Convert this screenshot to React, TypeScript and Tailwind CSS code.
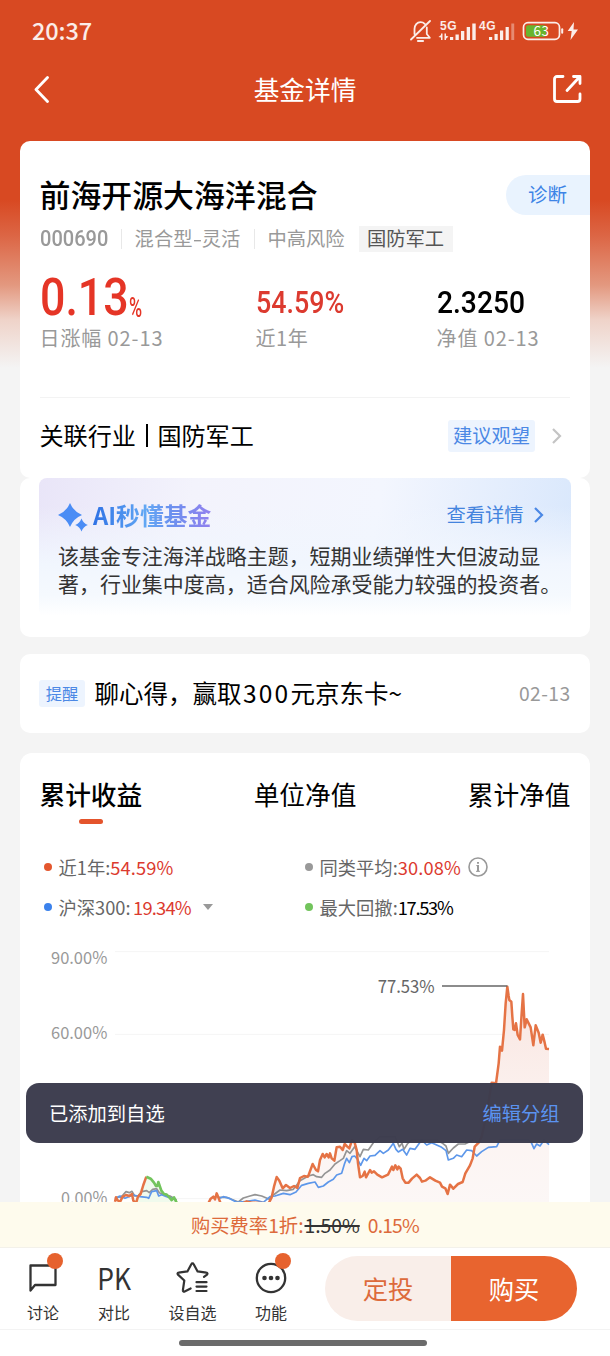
import type { ReactNode } from "react"

const ORANGE = "345,785 348,772 352,780 360,786 368,770 378,765 388,768 396,762 400,782 408,790 414,770 422,762 430,735 439,710"
const GREEN = "439,710 452,716 462,728 468,738 472,738 475,726 484,752 492,762 500,764 508,772 515,780 522,772 530,788"
const ORANGE_BASE = "625,790 632,776 640,770 645,778 650,760 656,775 662,790 728,790 740,784 755,788 806,790 815,772 822,740 830,711 838,722 848,745 858,735 870,744 882,738 892,744 900,714 912,708 924,710 938,672 948,690 954,694 960,660 968,642 974,652 980,642 986,652 990,640 995,655 1003,662 1010,622 1020,620"
const ORANGE_RISE = "1028,630 1034,612 1040,618 1048,625 1056,600 1064,608 1070,630 1074,670 1080,712 1088,708 1094,695 1098,712 1110,690 1115,698 1122,694 1132,704 1146,712 1164,704 1176,680 1180,690 1186,676 1192,688 1196,680 1202,686 1208,715 1216,728 1226,728 1236,716 1250,704 1260,714 1266,725 1276,722 1290,712 1306,722 1320,728 1326,740 1336,745 1343,762 1350,734 1360,746 1374,732 1388,726 1396,700 1410,676 1418,655 1424,620 1436,608 1445,590 1460,520 1475,428 1488,430 1496,370 1500,320 1506,332 1512,270 1517,190 1522,140 1526,168 1528,180 1534,185 1537,230 1540,268 1544,270 1548,250 1553,285 1560,298 1565,220 1569,162 1574,262 1580,238 1592,262 1600,316 1607,256 1616,278 1622,308 1628,284 1634,308 1638,326 1647,327"
const GRAY_START = "345,775 355,770 362,772 370,764 378,755 388,758 396,754 404,768 414,768 425,755 440,752 448,758 458,748 470,746 478,758 490,764 510,768 530,780"
const GRAY = "655,772 680,772 700,780 715,786 730,774 750,768 765,764 785,768 808,778 820,765 840,750 860,752 880,748 900,722 925,708 940,704 950,710 965,712 975,700 990,690 1005,672 1020,662 1030,655 1040,632 1050,640 1064,620 1080,650 1090,628 1105,630 1120,608 1140,590 1185,590 1198,620 1206,610 1212,628 1222,612 1235,600 1310,600 1325,608 1338,618 1345,640 1360,624 1375,612 1395,612 1420,600"
const BLUE_START = "345,778 360,768 375,775 400,765 420,770 440,772 446,775 455,755 470,752 476,768 485,764 500,770 525,778"
const BLUE = "655,776 670,770 690,776 710,787 740,784 765,780 790,787 810,770 825,768 850,760 870,764 888,756 905,736 925,730 945,726 955,742 970,738 985,726 1000,718 1010,705 1025,700 1034,670 1040,655 1048,668 1056,650 1064,648 1074,660 1082,676 1092,655 1100,662 1110,648 1125,646 1140,632 1150,640 1165,630 1180,610 1188,628 1195,636 1208,628 1220,645 1230,625 1245,628 1265,600 1280,615 1295,608 1310,615 1325,622 1338,632 1345,660 1360,655 1370,645 1385,650 1400,630 1415,632 1430,648 1445,635 1465,622 1490,620 1500,600 1585,600 1594,608 1602,626 1610,612 1620,618 1632,600 1647,614"

function StatusBar() {
  return (
    <div className="flex h-[62px] items-center justify-between pr-[30px] pl-[32px] text-white/90">
      <span className="text-[23.5px] leading-none font-medium tracking-[-0.1px]">20:37</span>
      <svg width="170" height="32" viewBox="410 15.500 170 32" fill="none" stroke="currentColor" strokeWidth="1.800" strokeLinecap="round" strokeLinejoin="round">
        <path d="M411 40 430 21.500M414.500 34.500V29.500c0-4 2.600-6.800 6-6.800 1.800 0 3.200.6 4.200 1.600M426.800 28v6.500l3 3.800H417" />
        <path d="M418 41.500h5" strokeWidth="2.200" />
        <g fill="currentColor" stroke="none" fontSize="12" fontWeight="700" fontFamily="Liberation Sans">
          <text x="440" y="30.500" textLength="16.500">5G</text>
          <text x="479" y="30.500" textLength="16.500">4G</text>
          <path d="M441 34h1.500v6.400H441zM438.500 37.500l2.500-2v2.600zM444.500 34h1.500v6.400h-1.500zM448.500 37l-2.500 2.200v-3z" />
          <path d="M450 37.500h3.200v2.900H450zM455.500 35h3.300v5.400h-3.300zM461 31.500h3.300v8.900H461zM466.700 27.500h3.300v12.900h-3.300zM472.300 24h3.400v16.400h-3.400z" />
          <path d="M489 37.500h3.200v2.900H489zM494.500 34.500h3.200v5.900h-3.200zM500 31h3.200v9.400H500zM505.600 27.500h3.200v12.900h-3.200z" />
          <path d="M511.300 24h2.900v16.400h-2.900z" opacity=".4" />
        </g>
        <rect x="523.500" y="23.200" width="36" height="16.600" rx="4.500" strokeWidth="1.700" />
        <rect x="526" y="25.700" width="20" height="11.600" rx="2" fill="#68b42e" stroke="none" />
        <text x="533.500" y="36.600" fill="white" stroke="none" fontSize="13.500" fontFamily="Noto Sans CJK SC" textLength="15.500">63</text>
        <path d="M562.200 29.800v3.400" strokeWidth="2" />
        <path d="M574 22.500l-6.300 9h4L570.500 40.500l7.500-10.500h-4.500z" fill="currentColor" stroke="none" />
      </svg>
    </div>
  )
}

function NavBar() {
  return (
    <div className="flex h-[54px] items-center justify-between pr-[28px] pl-[33px] text-white">
      <svg width="18" height="28" viewBox="0 0 18 28" fill="none" stroke="currentColor" strokeWidth="2.800" strokeLinecap="round" strokeLinejoin="round">
        <path d="M14.500 2.500 3 14.500l11.500 12" />
      </svg>
      <h1 className="pl-[7px] text-[25.7px] leading-none font-normal">基金详情</h1>
      <svg width="30" height="30" viewBox="0 0 30 30" fill="none" stroke="currentColor" strokeWidth="2.800" strokeLinecap="round" strokeLinejoin="round">
        <path d="M11 2.500H5A2.500 2.500 0 0 0 2.500 5v20A2.500 2.500 0 0 0 5 27.500h20.500A2.500 2.500 0 0 0 28 25V20" />
        <path d="M15 16.500 27.500 3M21.500 2.500H28V9.500" />
      </svg>
    </div>
  )
}

function Chevron({ className }: { className: string }) {
  return (
    <svg className={className} width="11" height="18" viewBox="0 0 11 18" fill="none" stroke="currentColor" strokeWidth="2.200">
      <path d="M2 2l7 7-7 7" />
    </svg>
  )
}

function FundSummary() {
  return (
    <section className="h-[337px] rounded-[10px] bg-white pl-5">
      <div className="flex h-[107px] items-center justify-between">
        <h2 className="text-[30.9px] leading-none font-medium text-black">前海开源大海洋混合</h2>
        <div className="flex h-10 w-[84px] items-center rounded-l-full bg-[#e9f3fe] pb-0.5 pl-[22px] text-[19.5px] leading-none text-[#3d84e6]">诊断</div>
      </div>
      <div className="-mt-[22px] flex h-[26px] items-center text-[19.3px] leading-none text-[#999]">
        <span className="w-[81px] font-[Roboto] text-[22px] font-medium"><span className="inline-block origin-left scale-x-[0.91]">000690</span></span>
        <span className="h-5 w-px bg-[#e8e8e8]" />
        <span className="w-[132px] pl-[13px] tracking-[0.1px]">混合型<span className="inline-block w-[9px] scale-x-[1.4] text-center">-</span>灵活</span>
        <span className="h-5 w-px bg-[#e8e8e8]" />
        <span className="w-[104px] pl-[13px]">中高风险</span>
        <span className="flex h-[26px] w-[94px] items-center justify-center bg-[#f4f4f4] text-[#555]">国防军工</span>
      </div>
      <div className="mr-5 flex h-[146px] border-b border-[#f3f3f3] pt-[18px]">
        <div className="w-[216px]">
          <div className="flex h-[56px] whitespace-nowrap font-[Roboto] font-medium text-[#e53526]">
            <span className="w-[89px] text-[52px] leading-[56px]"><span className="inline-block origin-left scale-x-[0.86]">0.13</span></span>
            <span className="mt-[24px] h-[32px] w-[14px] text-[27px] leading-[28px]"><span className="inline-block origin-left scale-x-[0.66]">%</span></span>
          </div>
          <div className="text-[20px] leading-[24px] tracking-[0.9px] text-[#999]">日涨幅 02-13</div>
        </div>
        <div className="w-[181px]">
          <div className="h-[56px] origin-left scale-x-[0.865] pt-[8px] font-[Roboto] text-[31px] leading-[50px] font-medium text-[#dc3a2f]">54.59%</div>
          <div className="text-[20px] leading-[24px] tracking-[0.6px] text-[#999]">近1年</div>
        </div>
        <div>
          <div className="h-[56px] origin-left scale-x-[0.91] pt-[8px] font-[Roboto] text-[31px] leading-[50px] font-medium text-black">2.3250</div>
          <div className="text-[20px] leading-[24px] tracking-[0.9px] whitespace-nowrap text-[#999]">净值 02-13</div>
        </div>
      </div>
      <div className="mr-5 flex h-[75px] items-center">
        <div className="flex flex-1 items-center text-[24.1px] leading-none text-black">
          关联行业<span className="mr-[9.5px] ml-[10px] h-[23px] w-[2px] bg-black" />国防军工
        </div>
        <span className="flex h-8 w-[87px] items-center justify-center rounded-[3px] bg-[#edf4fe] text-[19.3px] leading-none text-[#4b88e5]">建议观望</span>
        <Chevron className="mr-[8px] ml-[16px] text-[#c4c4c4]" />
      </div>
    </section>
  )
}

function AiCard() {
  return (
    <section className="h-[159px] rounded-[10px] bg-white px-[19.5px]">
      <div className="h-[138px] rounded-[8px] bg-[linear-gradient(to_bottom,transparent_20%,#f1f6fe_62%,#f5f9fe_85%,#fff_100%),linear-gradient(100deg,#e9e5f8_0%,#f3f3fc_28%,#f3f6fe_62%,#d8e7fc_100%)] pt-[19px] pl-[19px]">
        <div className="flex h-[36px] items-center">
          <svg className="mt-[3px]" width="30" height="30" viewBox="0 0 30 30" fill="#4a8cf5">
            <path d="M12 1Q15.500 9.500 24 13 15.500 16.500 12 25 8.500 16.500 0 13 8.500 9.500 12 1Z" />
            <path d="M23.500 16.500Q25.300 21.200 29.800 23 25.300 24.800 23.500 29.500 21.700 24.800 17.200 23 21.700 21.200 23.500 16.500Z" />
          </svg>
          <h3 className="ml-[5px] bg-[linear-gradient(90deg,#2f72e5,#63a8f4_45%,#6a91ef_65%,#9180ee)] bg-clip-text text-[23.8px] leading-[34px] font-bold text-transparent">AI秒懂基金</h3>
          <span className="ml-auto text-[19.3px] leading-none text-[#4484de]">查看详情</span>
          <Chevron className="mr-[27px] ml-[9px] text-[#4b88e5]" />
        </div>
        <p className="mt-[8px] text-[20.97px] leading-[28px] whitespace-nowrap text-[#333]">
          该基金专注海洋战略主题，短期业绩弹性大但波动显<br />
          著，行业集中度高，适合风险承受能力较强的投资者。
        </p>
      </div>
    </section>
  )
}

function Notice() {
  return (
    <section className="mt-[17px] flex h-[79px] items-center rounded-[10px] bg-white px-[19.5px]">
      <span className="flex h-[27px] w-[46px] items-center justify-center rounded-[3px] bg-[#edf4fe] text-[16.3px] leading-none text-[#4b88e5]">提醒</span>
      <span className="ml-[9.5px] flex-1 text-[24.5px] leading-none whitespace-nowrap text-black">聊心得，赢取<span className="ml-[1.5px] tracking-[2.2px]">300</span>元京东卡~</span>
      <span className="text-[19.3px] leading-none tracking-[0.4px] text-[#999]">02-13</span>
    </section>
  )
}

function Legend({ dot, label, children }: { dot: string; label: string; children: ReactNode }) {
  return (
    <div className="flex h-10 items-center text-[18.3px] leading-none whitespace-nowrap text-[#666]">
      <span className={`mr-[7px] size-2 rounded-full ${dot}`} />
      {label}:{children}
    </div>
  )
}

function Chart() {
  return (
    <svg width="531" height="262" viewBox="117 0 1593 786" fill="none" strokeLinejoin="round">
      <path d="M345 35H1647M345 283H1647M345 776H1647" stroke="#f5f5f5" strokeWidth="3" />
      <g fill="#999" fontSize="51" fontFamily="Noto Sans CJK SC">
        <text x="153" y="73" textLength="169" lengthAdjust="spacingAndGlyphs">90.00%</text>
        <text x="153" y="298" textLength="169" lengthAdjust="spacingAndGlyphs">60.00%</text>
        <text x="183" y="791" textLength="139" lengthAdjust="spacingAndGlyphs">0.00%</text>
      </g>
      <defs>
        <linearGradient id="area" x1="0" y1="0" x2="0" y2="1">
          <stop offset="0" stopColor="#f9e5e0" />
          <stop offset="0.65" stopColor="#fcf4f2" />
          <stop offset="1" stopColor="#fcf7f6" />
        </linearGradient>
      </defs>
      <polygon points={`${ORANGE_BASE} ${ORANGE_RISE} 1647,790`} fill="url(#area)" />
      <polygon points={`400,790 ${GREEN}`} fill="#f0faed" />
      <g stroke="#949494" strokeWidth="5">
        <polyline points={GRAY_START} />
        <polyline points={GRAY} />
      </g>
      <g stroke="#5d97ea" strokeWidth="5">
        <polyline points={BLUE_START} />
        <polyline points={BLUE} />
      </g>
      <g stroke="#e57345" strokeWidth="7.500">
        <polyline points={ORANGE} />
        <polyline points={`${ORANGE_BASE} ${ORANGE_RISE}`} />
      </g>
      <polyline points={GREEN} stroke="#72c45c" strokeWidth="8" />
      <text x="1133" y="158" fill="#666" fontSize="53" fontFamily="Noto Sans CJK SC" textLength="171" lengthAdjust="spacingAndGlyphs">77.53%</text>
      <path d="M1326 138H1522" stroke="#666" strokeWidth="5" />
    </svg>
  )
}

function Performance() {
  return (
    <section className="mt-[20px] h-[449px] rounded-t-[12px] bg-white px-[19.5px]">
      <div className="flex h-[94px] justify-between pt-[24px] pl-[0.5px] text-[25.7px] leading-[34px] text-black">
        <div className="font-medium">
          累计收益
          <div className="mt-[8px] ml-[39px] h-[5px] w-[24px] rounded-full bg-[#e4542c]" />
        </div>
        <div>单位净值</div>
        <div>累计净值</div>
      </div>
      <div className="grid h-[93px] grid-cols-[261px_1fr] content-start pl-[4.5px]">
        <Legend dot="bg-[#e4572e]" label="近1年"><span className="tracking-[0.1px] text-[#dc3a2f]">54.59%</span></Legend>
        <Legend dot="bg-[#999]" label="同类平均">
          <span className="tracking-[0.1px] text-[#dc3a2f]">30.08%</span>
          <svg className="ml-[7px]" width="20" height="20" viewBox="0 0 20 20" fill="none" stroke="#999" strokeWidth="1.600">
            <circle cx="10" cy="10" r="9" />
            <path d="M10 8v6.500M10 5v1.800" strokeWidth="2" />
            <path d="M8.300 8.600h1.700M8 14.300h4" strokeWidth="1" />
          </svg>
        </Legend>
        <Legend dot="bg-[#3b82ec]" label="沪深300">
          <span className="ml-[2.5px] tracking-[-0.8px] text-[#dc3a2f]">19.34%</span>
          <span className="ml-[12px] border-x-[5px] border-t-[6px] border-x-transparent border-t-[#999]" />
        </Legend>
        <Legend dot="bg-[#72c45c]" label="最大回撤"><span className="tracking-[-1.3px] text-black">17.53%</span></Legend>
      </div>
      <Chart />
    </section>
  )
}

function BottomItem({ label, className, badge, children }: { label: string; className: string; badge?: boolean; children: ReactNode }) {
  return (
    <div className={`flex flex-col items-center ${className}`}>
      <div className="relative mt-[13px] flex h-[34px] items-center justify-center text-[#333]">
        {children}
        {badge && <span className="absolute -top-[8px] -right-[4px] size-4 rounded-full bg-[#e6622e]" />}
      </div>
      <span className="mt-[8px] text-[16px] leading-[18px] whitespace-nowrap text-[#333]">{label}</span>
    </div>
  )
}

function BottomBar() {
  return (
    <div className="flex h-[82px] border-b border-[#f3f3f3] bg-white">
      <BottomItem label="讨论" className="w-[86px]" badge>
        <svg width="31" height="34" viewBox="0 0 31 34" fill="none" stroke="currentColor" strokeWidth="2.300" strokeLinejoin="round">
          <path d="M2.500 4.500H27.500v19.500H7l-4.500 5.500z" />
        </svg>
      </BottomItem>
      <BottomItem label="对比" className="w-[56px]">
        <span className="text-[30px] leading-[32px]"><span className="inline-block -translate-y-px scale-x-[0.88]">PK</span></span>
      </BottomItem>
      <BottomItem label="设自选" className="w-[101px]">
        <svg width="34" height="34" viewBox="1 0 34 34" fill="none" stroke="currentColor" strokeWidth="2.200" strokeLinecap="round" strokeLinejoin="round">
          <path d="M29 15.800 32 13.600c.8-.8.4-1.900-.6-2l-8.800-1.200L18.700 3.200c-.5-1-1.900-1-2.400 0L12.400 10.400 3.600 11.600c-1 .1-1.400 1.200-.6 2l6.300 5.900-1.400 9.700c-.2 1 .8 1.800 1.700 1.300l6-3" />
          <path d="M21.500 21.200h10M21.500 25.600h10M21.500 30h10" />
        </svg>
      </BottomItem>
      <BottomItem label="功能" className="w-[56px]" badge>
        <svg width="32" height="32" viewBox="0 0 32 32" fill="none" stroke="currentColor" strokeWidth="2.300">
          <circle cx="16" cy="16" r="14.200" />
          <g fill="currentColor" stroke="none">
            <circle cx="9.500" cy="16" r="2.300" />
            <circle cx="16" cy="16" r="2.300" />
            <circle cx="22.500" cy="16" r="2.300" />
          </g>
        </svg>
      </BottomItem>
      <div className="mt-[8px] ml-[26px] flex h-[65px] w-[252px] overflow-hidden rounded-full text-[25.300px] leading-none">
        <button className="w-1/2 bg-[#f9eee9] text-[#dd6a3b]">定投</button>
        <button className="w-1/2 bg-[#e8642f] text-white">购买</button>
      </div>
    </div>
  )
}

export default function App() {
  return (
    <div className="relative flex h-[1356px] w-[610px] flex-col overflow-hidden bg-[#f4f4f4] bg-[linear-gradient(to_bottom,#d84922_0,#d84922_200px,#dc6544_235px,#e3987f_285px,#efd3c9_320px,#f4f4f4_368px)] font-['Noto_Sans_CJK_SC',sans-serif]">
      <StatusBar />
      <NavBar />
      <main className="mt-[25px] pr-5 pl-[19.5px]">
        <FundSummary />
        <AiCard />
        <Notice />
        <Performance />
      </main>
      <div className="flex h-[46px] items-center justify-center border-b border-[#f3f1ea] bg-[#fefbed] pt-[2px] text-[19.3px] leading-none text-[#dd6a3b]">
        购买费率1折:<span className="ml-px text-[#333] line-through decoration-2">1.50%</span>
        <span className="ml-[8px] tracking-[-0.8px]">0.15%</span>
      </div>
      <BottomBar />
      <div className="flex flex-1 justify-center bg-white pt-[10px]">
        <span className="mr-[4px] h-[6px] w-[248px] rounded-full bg-[#6b6b6b]" />
      </div>
      <div className="absolute top-[1083px] left-[26px] flex h-[60px] w-[557px] items-center justify-between rounded-[13px] bg-[#3c3c4e]/98 pt-[2px] pr-[23.5px] pl-[23px] text-[19.3px] leading-none text-white">
        已添加到自选
        <span className="text-[#5b93f0]">编辑分组</span>
      </div>
    </div>
  )
}
